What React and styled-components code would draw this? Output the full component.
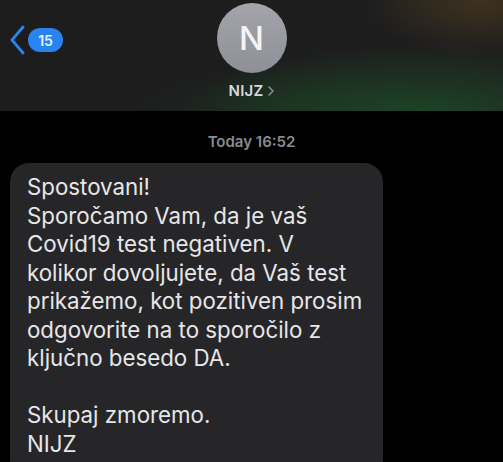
import React from 'react';
import styled, { createGlobalStyle } from 'styled-components';

const GlobalStyle = createGlobalStyle`
  html, body {
    margin: 0;
    padding: 0;
    background: #000;
  }
  body {
    width: 503px;
    height: 462px;
    overflow: hidden;
    font-family: Inter, "Liberation Sans", Arial, sans-serif;
  }
`;

const Screen = styled.div`
  width: 503px;
  height: 462px;
  background: #000;
  display: flex;
  flex-direction: column;
  overflow: hidden;
`;

const Header = styled.header`
  position: relative;
  height: 111px;
  flex-shrink: 0;
  background:
    radial-gradient(ellipse 150px 70px at 480px 0px, rgba(70, 56, 30, 0.8), transparent 80%),
    radial-gradient(ellipse 300px 90px at 420px 115px, rgba(30, 70, 38, 0.95), transparent 80%),
    radial-gradient(ellipse 200px 60px at 300px 115px, rgba(26, 52, 30, 0.7), transparent 85%),
    #1d1d1e;
  display: flex;
  flex-direction: column;
  align-items: center;
  padding-top: 3px;
  box-sizing: border-box;
`;

const BackButton = styled.div`
  position: absolute;
  left: 8px;
  top: 25px;
  display: flex;
  align-items: center;
  gap: 2px;
`;

const Badge = styled.span`
  display: inline-flex;
  align-items: center;
  justify-content: center;
  min-width: 35px;
  height: 24px;
  padding: 0 3px;
  box-sizing: border-box;
  border-radius: 12px;
  background: #2a84f0;
  color: #e8f1ff;
  font-size: 14px;
  font-weight: 600;
`;

const Avatar = styled.div`
  width: 70px;
  height: 70px;
  border-radius: 50%;
  background: linear-gradient(180deg, #a4a4ab 0%, #8f9097 100%);
  display: flex;
  align-items: center;
  justify-content: center;
  color: #f4f4f6;
  font-size: 33px;
  font-weight: 500;
`;

const ContactName = styled.div`
  margin-top: 8px;
  display: flex;
  align-items: center;
  gap: 5px;
  color: #d8d8dc;
  font-size: 15px;
  font-weight: 600;
  letter-spacing: 0.2px;
`;

const Thread = styled.main`
  flex: 1;
  display: flex;
  flex-direction: column;
  padding: 22px 0 0 10px;
`;

const Stamp = styled.div`
  align-self: center;
  margin-left: -10px;
  color: #8b8b90;
  font-size: 15px;
  font-weight: 600;
  line-height: 18px;
`;

const Bubble = styled.div`
  margin-top: 12px;
  width: 373px;
  box-sizing: border-box;
  padding: 10px 12px 20px 17px;
  background: #262628;
  border-radius: 19px;
  color: #e6e6e8;
  font-size: 22.3px;
  line-height: 28.5px;
  white-space: pre-line;
`;

const message = `Spostovani!
Sporočamo Vam, da je vaš
Covid19 test negativen. V
kolikor dovoljujete, da Vaš test
prikažemo, kot pozitiven prosim
odgovorite na to sporočilo z
ključno besedo DA.

Skupaj zmoremo.
NIJZ`;

export default function App() {
  return (
    <>
      <GlobalStyle />
      <Screen>
        <Header>
          <BackButton>
            <svg width="18" height="30" viewBox="0 0 18 30" fill="none">
              <path d="M15 2 L4 15 L15 28" stroke="#2a84f0" strokeWidth="2.8" strokeLinecap="round" strokeLinejoin="round" />
            </svg>
            <Badge>15</Badge>
          </BackButton>
          <Avatar>N</Avatar>
          <ContactName>
            NIJZ
            <svg width="6" height="10" viewBox="0 0 6 10" fill="none">
              <path d="M1 1 L5 5 L1 9" stroke="#8e8e93" strokeWidth="1.5" strokeLinecap="round" strokeLinejoin="round" />
            </svg>
          </ContactName>
        </Header>
        <Thread>
          <Stamp>Today 16:52</Stamp>
          <Bubble>{message}</Bubble>
        </Thread>
      </Screen>
    </>
  );
}
